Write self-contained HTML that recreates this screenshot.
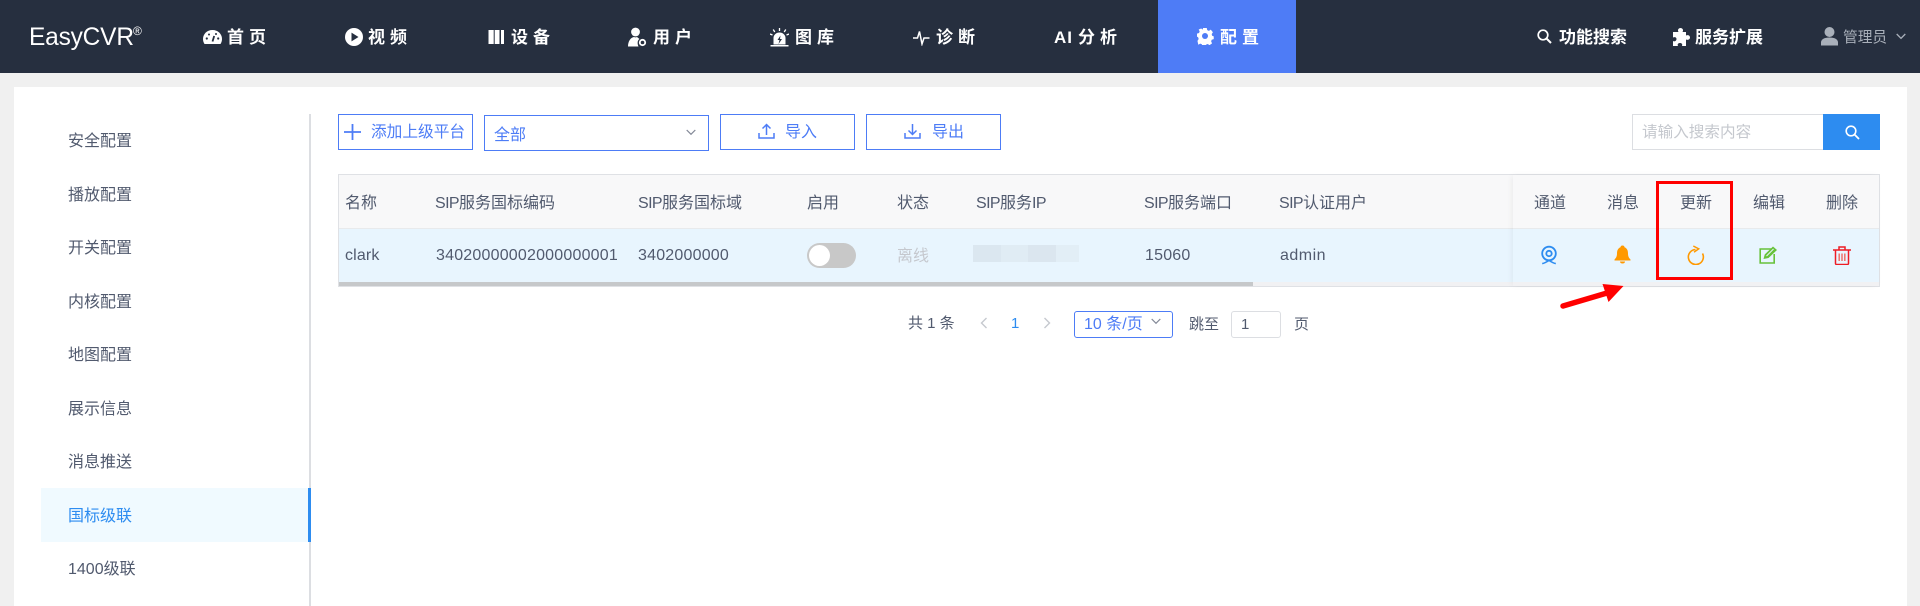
<!DOCTYPE html>
<html lang="zh-CN"><head><meta charset="utf-8"><title>EasyCVR</title>
<style>
*{box-sizing:border-box;margin:0;padding:0}
html,body{width:1920px;height:606px;overflow:hidden;background:#f0f0f0;font-family:"Liberation Sans","Noto Sans CJK SC",sans-serif;color:#515a6e;font-size:16px}
.a{position:absolute}
.t{position:absolute;white-space:nowrap;line-height:22px;height:22px}
svg{position:absolute;display:block}
.n{color:#fff;font-weight:700;font-size:17px;letter-spacing:5px}
.r{color:#fff;font-weight:700;font-size:17px;letter-spacing:0}
.b{position:absolute;border:1px solid #4d7cf6;background:#fff}
.bt{color:#4d7cf6}
.s{letter-spacing:-.6px}
</style></head><body>
<!-- header -->
<div class="a" style="left:0;top:0;width:1920px;height:73px;background:#262f3f"></div>
<div class="a" style="left:1158px;top:0;width:138px;height:73px;background:#4e7cf6"></div>
<span class="t" style="left:29px;top:21px;height:32px;line-height:32px;font-size:25px;color:#fff;letter-spacing:-.2px;font-weight:400;transform:scaleX(.98);transform-origin:0 50%">EasyCVR</span>
<span class="t" style="left:133px;top:24px;font-size:12px;height:14px;line-height:14px;color:#fff">®</span>

<svg style="left:203px;top:30px" width="19" height="14" viewBox="0 0 19 14"><path d="M9.500 0C4 0 0 4 0 9c0 2 .6 3.600 1.500 5h16c.9-1.400 1.500-3 1.500-5 0-5-4-9-9.500-9z" fill="#fff"/><path d="M9.500 11.500l1.700-5.500" stroke="#262f3f" stroke-width="1.800"/><circle cx="3.800" cy="8.500" r="1.100" fill="#262f3f"/><circle cx="15.200" cy="8.500" r="1.100" fill="#262f3f"/><circle cx="6" cy="4.500" r="1" fill="#262f3f"/><circle cx="13" cy="4" r="1" fill="#262f3f"/></svg>
<span class="t n" style="left:227px;top:27px">首页</span>

<svg style="left:345px;top:28px" width="18" height="18" viewBox="0 0 18 18"><circle cx="9" cy="9" r="9" fill="#fff"/><path d="M6.500 4.600v8.800L13.500 9z" fill="#262f3f"/></svg>
<span class="t n" style="left:368px;top:27px">视频</span>

<svg style="left:488px;top:30px" width="17" height="14" viewBox="0 0 17 14"><path d="M.5 0h5.200v14H.5zM6.700 0h4.800v14H6.700zM13 0h3v14h-3z" fill="#fff"/></svg>
<span class="t n" style="left:511px;top:27px">设备</span>

<svg style="left:628px;top:27px" width="19" height="20" viewBox="0 0 19 20"><circle cx="7.500" cy="5" r="4.400" fill="#fff"/><path d="M0 19.500c0-5 2.500-9 6-9.500 1 .5 2 .5 3 0l2.500 2c-2 1-2.500 4.500-1 7.500z" fill="#fff"/><circle cx="14.500" cy="15.500" r="2.700" fill="none" stroke="#fff" stroke-width="1.800"/></svg>
<span class="t n" style="left:653px;top:27px">用户</span>

<svg style="left:770px;top:28px" width="19" height="19" viewBox="0 0 19 19"><path d="M3.500 16.500V10a6 5.500 0 0 1 12 0v6.500z" fill="#fff"/><path d="M.5 17.800h18" stroke="#fff" stroke-width="1.500"/><path d="M9.500 0v3M3.200 1.500l1.600 2.500M15.800 1.500l-1.600 2.500M0 6l2.500 1M19 6l-2.500 1" stroke="#fff" stroke-width="1.300"/><path d="M10.500 7.500l-3 4.500h2L8.500 16l3.500-5h-2z" fill="#262f3f"/></svg>
<span class="t n" style="left:795px;top:27px">图库</span>

<svg style="left:913px;top:30px" width="17" height="16" viewBox="0 0 17 16"><path d="M0 8h4.500l2-6.500 2.500 12.500 2-6h5.500" fill="none" stroke="#fff" stroke-width="1.500"/></svg>
<span class="t n" style="left:936px;top:27px">诊断</span>

<span class="t n" style="left:1054px;top:27px;letter-spacing:1px">AI</span>
<span class="t n" style="left:1078px;top:27px">分析</span>

<svg style="left:1197px;top:28px" width="17" height="17" viewBox="0 0 17 17"><path d="M6.500 0h4l.5 2.300 1.800.8 2-1.300 2.300 2.800-1.300 2 .5 1.700 1.700.7v3l-2.200.6-.6 1.800 1 2.100-2.800 2-1.800-1.300-1.900.7-.5 1.800h-3.500l-.5-2.200-1.800-.7-2 1.200L.5 13.800l1.300-2-.6-1.800L0 9.300v-3.300l2.200-.6.700-1.800-1.100-2L4.500.5l1.700 1.300z" fill="#fff" transform="scale(.93)"/><circle cx="8" cy="8" r="3" fill="#4e7cf6"/></svg>
<span class="t n" style="left:1220px;top:27px">配置</span>

<svg style="left:1537px;top:29px" width="15" height="15" viewBox="0 0 15 15"><circle cx="6" cy="6" r="4.800" fill="none" stroke="#fff" stroke-width="1.700"/><path d="M9.500 9.500l4.500 4.500" stroke="#fff" stroke-width="2"/></svg>
<span class="t r" style="left:1559px;top:27px">功能搜索</span>
<svg style="left:1672px;top:28px" width="18" height="18" viewBox="0 0 18 18"><path d="M6.500 4C5 1.500 7 0 8.500 0S12 1.500 10.500 4h3.500v3.500c2.500-1 4 .5 4 2s-1.500 3-4 2V18h-4c.8-2-.5-3-2-3s-3 1-2 3H1v-5c2 1 3.500-.5 3.500-2S3 8.500 1 9.500V4z" fill="#fff"/></svg>
<span class="t r" style="left:1695px;top:27px">服务扩展</span>
<svg style="left:1821px;top:27px" width="17" height="19" viewBox="0 0 17 19"><circle cx="8.500" cy="5" r="5" fill="#a9b0ba"/><path d="M0 18.500v-3c0-3 3-5 8.500-5s8.500 2 8.500 5v3z" fill="#a9b0ba"/></svg>
<span class="t" style="left:1843px;top:27px;font-size:14.700px;color:#a9b0ba">管理员</span>
<svg style="left:1896px;top:33px" width="10" height="7" viewBox="0 0 10 7"><path d="M.7 1l4.300 4.300L9.300 1" fill="none" stroke="#a9b0ba" stroke-width="1.300"/></svg>

<!-- main -->
<div class="a" style="left:14px;top:87px;width:1893px;height:519px;background:#fff"></div>
<div class="a" style="left:309px;top:114px;width:2px;height:492px;background:#dcdee2"></div>
<div class="a" style="left:41px;top:488px;width:270px;height:54px;background:#f0faff"></div>
<div class="a" style="left:308px;top:488px;width:3px;height:54px;background:#2d8cf0"></div>
<span class="t" style="left:68px;top:131px">安全配置</span>
<span class="t" style="left:68px;top:185px">播放配置</span>
<span class="t" style="left:68px;top:238px">开关配置</span>
<span class="t" style="left:68px;top:292px">内核配置</span>
<span class="t" style="left:68px;top:345px">地图配置</span>
<span class="t" style="left:68px;top:399px">展示信息</span>
<span class="t" style="left:68px;top:452px">消息推送</span>
<span class="t" style="left:68px;top:506px;color:#2d8cf0">国标级联</span>
<span class="t" style="left:68px;top:559px">1400级联</span>

<!-- toolbar -->
<div class="b" style="left:338px;top:114px;width:135px;height:36px"></div>
<svg style="left:344px;top:124px" width="17" height="16" viewBox="0 0 17 16"><path d="M8.500 0v16M0 8h17" stroke="#4d7cf6" stroke-width="1.800"/></svg>
<span class="t bt" style="left:371px;top:122px;font-size:15.700px">添加上级平台</span>
<div class="b" style="left:484px;top:115px;width:225px;height:36px"></div>
<span class="t bt" style="left:494px;top:125px">全部</span>
<svg style="left:686px;top:129px" width="10" height="7" viewBox="0 0 10 7"><path d="M.7 1l4.300 4.300L9.300 1" fill="none" stroke="#808695" stroke-width="1.200"/></svg>
<div class="b" style="left:720px;top:114px;width:135px;height:36px"></div>
<svg style="left:758px;top:123px" width="17" height="16" viewBox="0 0 17 16"><path d="M8.500 12V2M4.500 5.500l4-4 4 4M1 10v5h15v-5" fill="none" stroke="#4d7cf6" stroke-width="1.500"/></svg>
<span class="t bt" style="left:785px;top:122px">导入</span>
<div class="b" style="left:866px;top:114px;width:135px;height:36px"></div>
<svg style="left:904px;top:123px" width="17" height="16" viewBox="0 0 17 16"><path d="M8.500 1v10M4.500 7.500l4 4 4-4M1 10v5h15v-5" fill="none" stroke="#4d7cf6" stroke-width="1.500"/></svg>
<span class="t bt" style="left:932px;top:122px">导出</span>

<!-- search -->
<div class="a" style="left:1632px;top:114px;width:192px;height:36px;border:1px solid #dcdee2;background:#fff"></div>
<span class="t" style="left:1642px;top:122px;color:#c5c8ce;font-size:15.600px">请输入搜索内容</span>
<div class="a" style="left:1823px;top:114px;width:57px;height:36px;background:#2d8cf0"></div>
<svg style="left:1845px;top:125px" width="15" height="15" viewBox="0 0 15 15"><circle cx="6" cy="6" r="4.800" fill="none" stroke="#fff" stroke-width="1.600"/><path d="M9.500 9.500l4.500 4.500" stroke="#fff" stroke-width="1.800"/></svg>

<!-- table -->
<div class="a" style="left:338px;top:174px;width:1542px;height:113px;border:1px solid #dfe1e5;background:#f8f8f9"></div>
<div class="a" style="left:339px;top:228px;width:1540px;height:1px;background:#e8eaec"></div>
<div class="a" style="left:339px;top:229px;width:1540px;height:53px;background:#e8f5fe"></div>
<div class="a" style="left:339px;top:282px;width:1540px;height:4px;background:#f1f1f3"></div>
<div class="a" style="left:339px;top:282px;width:914px;height:4px;background:#c6c8ca"></div>

<span class="t" style="left:345px;top:193px">名称</span>
<span class="t" style="left:435px;top:193px"><span class="s">SIP</span>服务国标编码</span>
<span class="t" style="left:638px;top:193px"><span class="s">SIP</span>服务国标域</span>
<span class="t" style="left:807px;top:193px">启用</span>
<span class="t" style="left:897px;top:193px">状态</span>
<span class="t" style="left:976px;top:193px"><span class="s">SIP</span>服务<span class="s">IP</span></span>
<span class="t" style="left:1144px;top:193px"><span class="s">SIP</span>服务端口</span>
<span class="t" style="left:1279px;top:193px"><span class="s">SIP</span>认证用户</span>

<span class="t" style="left:345px;top:245px;letter-spacing:.15px">clark</span>
<span class="t" style="left:436px;top:245px;letter-spacing:.2px">34020000002000000001</span>
<span class="t" style="left:638px;top:245px;letter-spacing:.2px">3402000000</span>
<div class="a" style="left:807px;top:243px;width:49px;height:25px;border-radius:13px;background:#c8c8c8"></div>
<div class="a" style="left:809px;top:245px;width:21px;height:21px;border-radius:50%;background:#fff"></div>
<span class="t" style="left:897px;top:246px;color:#c5c8ce">离线</span>
<div class="a" style="left:973px;top:245px;width:28px;height:17px;background:#dbe7f0"></div>
<div class="a" style="left:1001px;top:245px;width:27px;height:17px;background:#e0ecf4"></div>
<div class="a" style="left:1028px;top:245px;width:28px;height:17px;background:#dbe6ef"></div>
<div class="a" style="left:1056px;top:245px;width:23px;height:17px;background:#e2eef6"></div>
<span class="t" style="left:1145px;top:245px;letter-spacing:.2px">15060</span>
<span class="t" style="left:1280px;top:245px;letter-spacing:.5px">admin</span>

<!-- fixed right -->
<div class="a" style="left:1513px;top:175px;width:366px;height:111px;background:#f8f8f9;box-shadow:-2px 0 6px -1px rgba(0,0,0,.06)"></div>
<div class="a" style="left:1513px;top:228px;width:366px;height:1px;background:#e8eaec"></div>
<div class="a" style="left:1513px;top:229px;width:366px;height:53px;background:#e8f5fe"></div>
<div class="a" style="left:1513px;top:282px;width:366px;height:4px;background:#f1f1f3"></div>
<span class="t" style="left:1534px;top:193px">通道</span>
<span class="t" style="left:1607px;top:193px">消息</span>
<span class="t" style="left:1680px;top:193px">更新</span>
<span class="t" style="left:1753px;top:193px">编辑</span>
<span class="t" style="left:1826px;top:193px">删除</span>

<svg style="left:1541px;top:245px" width="16" height="20" viewBox="0 0 16 20"><circle cx="8" cy="8.500" r="6.800" fill="none" stroke="#2d8cf0" stroke-width="1.800"/><circle cx="8" cy="8.500" r="2.700" fill="none" stroke="#2d8cf0" stroke-width="1.800"/><path d="M1.200 18.600c2-.3 4.300-1.600 6.800-3.100 2.500 1.500 4.800 2.800 6.800 3.100" stroke="#2d8cf0" stroke-width="1.600" fill="none"/></svg>
<svg style="left:1614px;top:245px" width="17" height="19" viewBox="0 0 17 19"><path d="M8.500 .5C10 .5 10.500 1.500 10.500 2.300 13 3.300 14 5.500 14 8.500c0 3 1 4.500 2.500 6v1H.5v-1C2 13 3 11.500 3 8.500c0-3 1-5.200 3.500-6.200C6.500 1.500 7 .5 8.500 .5z" fill="#f90"/><path d="M6 16.500h5c0 1.300-1 2-2.500 2S6 17.800 6 16.500z" fill="#f90"/></svg>
<svg style="left:1687px;top:245px" width="18" height="20" viewBox="0 0 18 20"><path d="M8.500 4.500A7.500 7.500 0 1 0 15.500 8.500" fill="none" stroke="#f90" stroke-width="1.600"/><path d="M6.300 1l5.400 2.800L7 7.200" fill="none" stroke="#f90" stroke-width="1.500"/></svg>
<svg style="left:1759px;top:246px" width="19" height="18" viewBox="0 0 19 18"><path d="M12.500 3H1.200v14h14V8" fill="none" stroke="#67c23a" stroke-width="1.600"/><path d="M4.500 13l1.200-4.500L14 .5 18 4 9.500 12z" fill="#67c23a"/><path d="M7.500 10L14.500 3" stroke="#e8f5fe" stroke-width="1"/></svg>
<svg style="left:1833px;top:246px" width="18" height="19" viewBox="0 0 18 19"><path d="M0 4h18M6 4V1h6v3" fill="none" stroke="#ed1c24" stroke-width="1.500"/><path d="M2.500 4v13.500c0 .5.500 1 1 1h11c.5 0 1-.5 1-1V4" fill="none" stroke="#ed1c24" stroke-width="1.500"/><path d="M6.200 7.500v7.500M9 7.500v7.500M11.800 7.500v7.500" stroke="#f0706a" stroke-width="1.500"/></svg>

<!-- red annotation -->
<div class="a" style="left:1656px;top:181px;width:77px;height:99px;border:3.500px solid #f00"></div>
<svg style="left:1555px;top:279px" width="75" height="34" viewBox="0 0 75 34"><path d="M8 27L52 14" stroke="#f00" stroke-width="5.500" stroke-linecap="round"/><path d="M68.500 7L47.500 5l6 18z" fill="#f00"/></svg>

<!-- pagination -->
<span class="t" style="left:908px;top:313px;font-size:15px">共 1 条</span>
<svg style="left:980px;top:317px" width="8" height="12" viewBox="0 0 8 12"><path d="M6.500 1L1.500 6l5 5" fill="none" stroke="#c5c8ce" stroke-width="1.400"/></svg>
<span class="t" style="left:1011px;top:313px;font-size:15px;color:#2d8cf0">1</span>
<svg style="left:1043px;top:317px" width="8" height="12" viewBox="0 0 8 12"><path d="M1.500 1l5 5-5 5" fill="none" stroke="#c5c8ce" stroke-width="1.400"/></svg>
<div class="a" style="left:1074px;top:311px;width:99px;height:27px;border:1px solid #4d7cf6;border-radius:3px;background:#fff"></div>
<span class="t" style="left:1084px;top:314px;color:#4d7cf6">10 条/页</span>
<svg style="left:1151px;top:318px" width="10" height="7" viewBox="0 0 10 7"><path d="M.7 1l4.300 4.300L9.300 1" fill="none" stroke="#808695" stroke-width="1.200"/></svg>
<span class="t" style="left:1189px;top:314px;font-size:15px">跳至</span>
<div class="a" style="left:1231px;top:311px;width:50px;height:27px;border:1px solid #dcdee2;border-radius:3px;background:#fff"></div>
<span class="t" style="left:1241px;top:314px;font-size:15px">1</span>
<span class="t" style="left:1294px;top:314px;font-size:15px">页</span>
</body></html>
